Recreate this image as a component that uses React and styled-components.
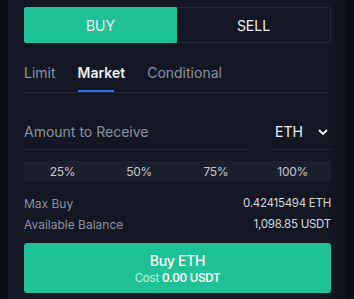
import styled, { createGlobalStyle } from "styled-components"
import { useState } from "react"

const Global = createGlobalStyle`
  html, body {
    margin: 0;
    background: #0b0d16;
  }
  body {
    font-family: Inter, "Noto Sans", sans-serif;
  }
`

const Page = styled.div`
  width: 354px;
  height: 299px;
  display: flex;
  background: #0b0d16;
`

const Panel = styled.div`
  width: 338px;
  margin-left: 8px;
  background: linear-gradient(90deg, #131723 0%, #131723 94%, #0f121c 100%);
  padding: 7px 15px 0 16px;
  box-sizing: border-box;
  display: flex;
  flex-direction: column;
`

const Side = styled.div`
  display: grid;
  grid-template-columns: 153px 154px;
  height: 36px;
`

const SideBtn = styled.button`
  border: 1px solid ${p => (p.$active ? "#20c197" : "#262b38")};
  border-left: ${p => (p.$active ? "1px solid #20c197" : "none")};
  background: ${p => (p.$active ? "#20c197" : "transparent")};
  color: #eef0f4;
  font-family: inherit;
  font-size: 14px;
  border-radius: ${p => (p.$active ? "2px 0 0 2px" : "0 2px 2px 0")};
  cursor: pointer;
`

const Tabs = styled.div`
  display: flex;
  gap: 22px;
  margin-top: 21px;
  border-bottom: 1px solid #232836;
  width: 305px;
`

const Tab = styled.div`
  font-size: 14px;
  line-height: 17px;
  color: ${p => (p.$active ? "#eef0f4" : "#8d92a0")};
  font-weight: ${p => (p.$active ? 600 : 400)};
  padding-bottom: 11px;
  position: relative;
  cursor: pointer;
  &::after {
    content: "";
    display: ${p => (p.$active ? "block" : "none")};
    position: absolute;
    left: 0;
    width: 36px;
    bottom: 0;
    height: 2px;
    background: #2e6be6;
  }
`

const AmountRow = styled.div`
  display: flex;
  justify-content: space-between;
  margin-top: 30px;
`

const AmountField = styled.div`
  width: 227px;
  font-size: 14px;
  line-height: 17px;
  color: #8d92a0;
  padding-bottom: 9px;
  border-bottom: 1px solid #232836;
`

const CoinField = styled.div`
  width: 59px;
  display: flex;
  align-items: center;
  justify-content: space-between;
  font-size: 14px;
  line-height: 17px;
  color: #eef0f4;
  padding: 0 2px 9px 3px;
  box-sizing: border-box;
  border-bottom: 1px solid #232836;
`

const Percents = styled.div`
  display: grid;
  grid-template-columns: repeat(4, 1fr);
  margin-top: 11px;
  background: #1c202c;
  height: 20px;
  align-items: center;
`

const Pct = styled.div`
  text-align: center;
  font-size: 12px;
  color: #c4c7cf;
  letter-spacing: -0.3px;
`

const Info = styled.div`
  display: flex;
  justify-content: space-between;
  font-size: 12px;
  line-height: 15px;
  margin-top: ${p => p.$first ? "15px" : "6px"};
  color: #8d92a0;
  span:last-child {
    color: #d4d7de;
    font-size: 11.5px;
    letter-spacing: -0.25px;
  }
`

const BuyBtn = styled.button`
  margin-top: 11px;
  height: 50px;
  border: none;
  border-radius: 3px;
  background: #20c197;
  color: #ffffff;
  font-family: inherit;
  display: flex;
  flex-direction: column;
  align-items: center;
  justify-content: center;
  gap: 2px;
  padding: 0;
  cursor: pointer;
`

const BuyLabel = styled.div`
  font-size: 14px;
  line-height: 17px;
  font-weight: 500;
  letter-spacing: -0.3px;
`

const Cost = styled.div`
  font-size: 11.5px;
  line-height: 14px;
  letter-spacing: -0.2px;
  color: #c6f1e4;
  b {
    color: #ffffff;
    font-weight: 600;
  }
`

const Chevron = () => (
  <svg width="12" height="12" viewBox="0 0 12 12" fill="none">
    <path d="M2.5 4.5 6 8l3.5-3.5" stroke="#eef0f4" strokeWidth="1.8" strokeLinecap="round" strokeLinejoin="round" />
  </svg>
)

export default function App() {
  const [side, setSide] = useState("buy")
  const [tab, setTab] = useState("Market")
  return (
    <Page>
      <Global />
      <Panel>
        <Side>
          <SideBtn $active={side === "buy"} onClick={() => setSide("buy")}>BUY</SideBtn>
          <SideBtn $active={side === "sell"} onClick={() => setSide("sell")}>SELL</SideBtn>
        </Side>
        <Tabs>
          {["Limit", "Market", "Conditional"].map(t => (
            <Tab key={t} $active={tab === t} onClick={() => setTab(t)}>{t}</Tab>
          ))}
        </Tabs>
        <AmountRow>
          <AmountField>Amount to Receive</AmountField>
          <CoinField>ETH <Chevron /></CoinField>
        </AmountRow>
        <Percents>
          {["25%", "50%", "75%", "100%"].map(p => <Pct key={p}>{p}</Pct>)}
        </Percents>
        <Info $first><span>Max Buy</span><span>0.42415494 ETH</span></Info>
        <Info><span>Available Balance</span><span>1,098.85 USDT</span></Info>
        <BuyBtn>
          <BuyLabel>Buy ETH</BuyLabel>
          <Cost>Cost <b>0.00 USDT</b></Cost>
        </BuyBtn>
      </Panel>
    </Page>
  )
}
